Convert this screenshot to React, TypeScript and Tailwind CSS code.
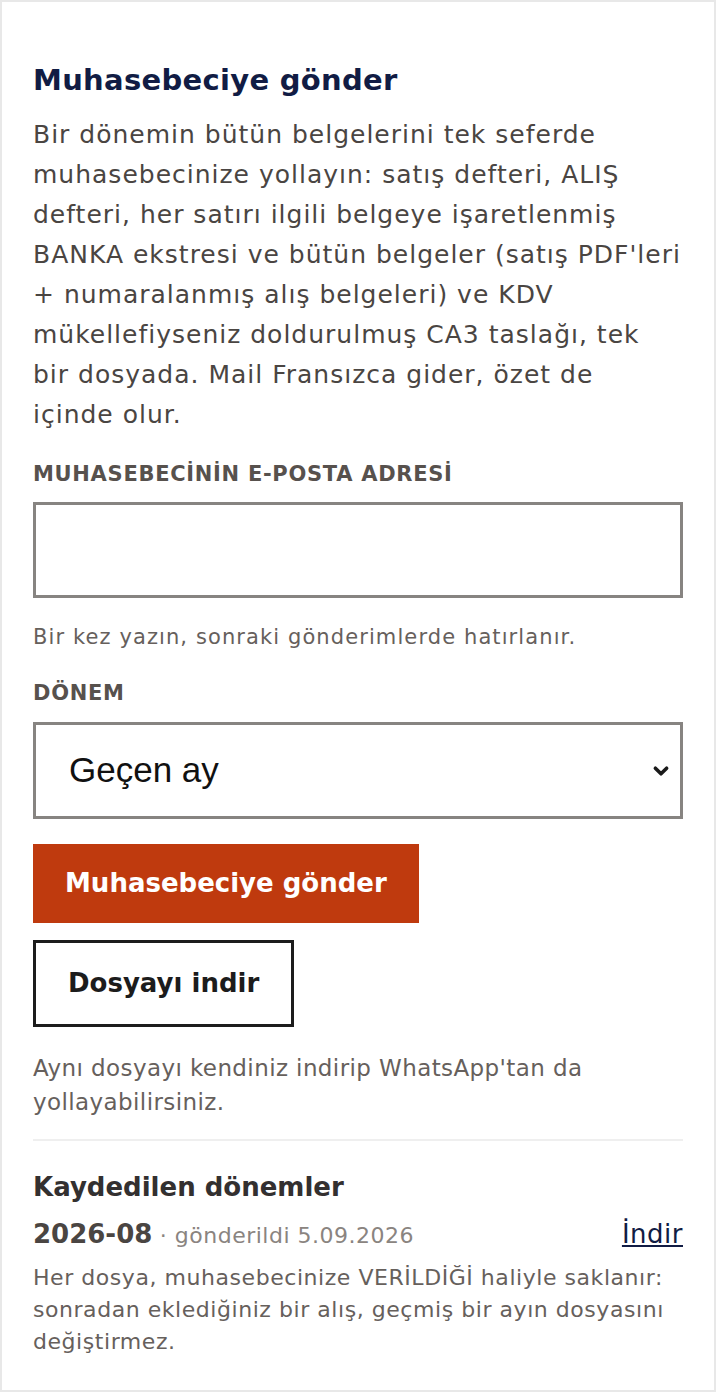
import React from 'react';

export default function App() {
  return (
    <div className="min-h-[1392px] w-[716px] border-2 border-[#e8e8e8] bg-white font-['DejaVu_Sans',sans-serif] text-[#4a4542]">
      <div className="px-[31px] pt-[58px] pb-[30px]">
        <h2 className="text-[29px] font-bold leading-[40px] tracking-[0.3px] text-[#111c44]">Muhasebeciye gönder</h2>
        <p className="mt-[15px] whitespace-nowrap text-[25px] leading-[40px] tracking-[1px] text-[#4a4542]">
          Bir dönemin bütün belgelerini tek seferde<br />
          muhasebecinize yollayın: satış defteri, ALIŞ<br />
          defteri, her satırı ilgili belgeye işaretlenmiş<br />
          BANKA ekstresi ve bütün belgeler (satış PDF'leri<br />
          + numaralanmış alış belgeleri) ve KDV<br />
          mükellefiyseniz doldurulmuş CA3 taslağı, tek<br />
          bir dosyada. Mail Fransızca gider, özet de<br />
          içinde olur.
        </p>

        <label className="mt-[24px] block text-[21px] font-bold leading-[30px] tracking-[0.7px] text-[#57514d]">MUHASEBECİNİN E-POSTA ADRESİ</label>
        <input type="email" className="mt-[13px] block h-[96px] w-full border-[3px] border-[#878481] bg-white px-4 text-[24px] outline-none" />
        <p className="mt-[24px] whitespace-nowrap text-[21px] leading-[30px] tracking-[1.1px] text-[#66605c]">Bir kez yazın, sonraki gönderimlerde hatırlanır.</p>

        <label className="mt-[26px] block text-[21px] font-bold leading-[30px] tracking-[0.7px] text-[#57514d]">DÖNEM</label>
        <div className="relative mt-[14px]">
          <select className="block h-[97px] w-full appearance-none border-[3px] border-[#878481] bg-white pl-[33px] font-['Liberation_Sans',sans-serif] text-[35px] text-[#111] outline-none">
            <option>Geçen ay</option>
          </select>
          <svg className="pointer-events-none absolute right-[13px] top-1/2 h-[18px] w-[18px] -translate-y-1/2" viewBox="0 0 16 16" fill="none" stroke="#1a1a1a" strokeWidth="3.2" strokeLinecap="round" strokeLinejoin="round">
            <path d="M3 5.5l5 5 5-5" />
          </svg>
        </div>

        <div className="mt-[25px] flex flex-col items-start gap-[17px]">
          <button className="h-[79px] bg-[#bf3a0e] px-[32px] text-[26px] font-bold text-white">Muhasebeciye gönder</button>
          <button className="h-[87px] border-[3px] border-[#1c1c1c] bg-white px-[32px] text-[26px] font-bold text-[#1c1c1c]">Dosyayı indir</button>
        </div>

        <p className="mt-[24px] whitespace-nowrap text-[23px] leading-[34px] tracking-[0.4px] text-[#66605c]">
          Aynı dosyayı kendiniz indirip WhatsApp'tan da<br />
          yollayabilirsiniz.
        </p>

        <div className="mt-[20px] border-t-2 border-[#efefef]" />

        <h3 className="mt-[28px] text-[26px] font-semibold leading-[36px] text-[#333030]">Kaydedilen dönemler</h3>
        <div className="mt-[10px] flex items-baseline justify-between">
          <div>
            <span className="text-[26px] font-semibold text-[#4a4542]">2026-08</span>
            <span className="text-[22px] tracking-[0.5px] text-[#8a8480]"> · gönderildi 5.09.2026</span>
          </div>
          <a href="#" className="text-[26px] tracking-[0.5px] text-[#111c44] underline">İndir</a>
        </div>
        <p className="mt-[8px] whitespace-nowrap text-[22px] leading-[32px] tracking-[0.55px] text-[#66605c]">
          Her dosya, muhasebecinize VERİLDİĞİ haliyle saklanır:<br />
          sonradan eklediğiniz bir alış, geçmiş bir ayın dosyasını<br />
          değiştirmez.
        </p>
      </div>
    </div>
  );
}
